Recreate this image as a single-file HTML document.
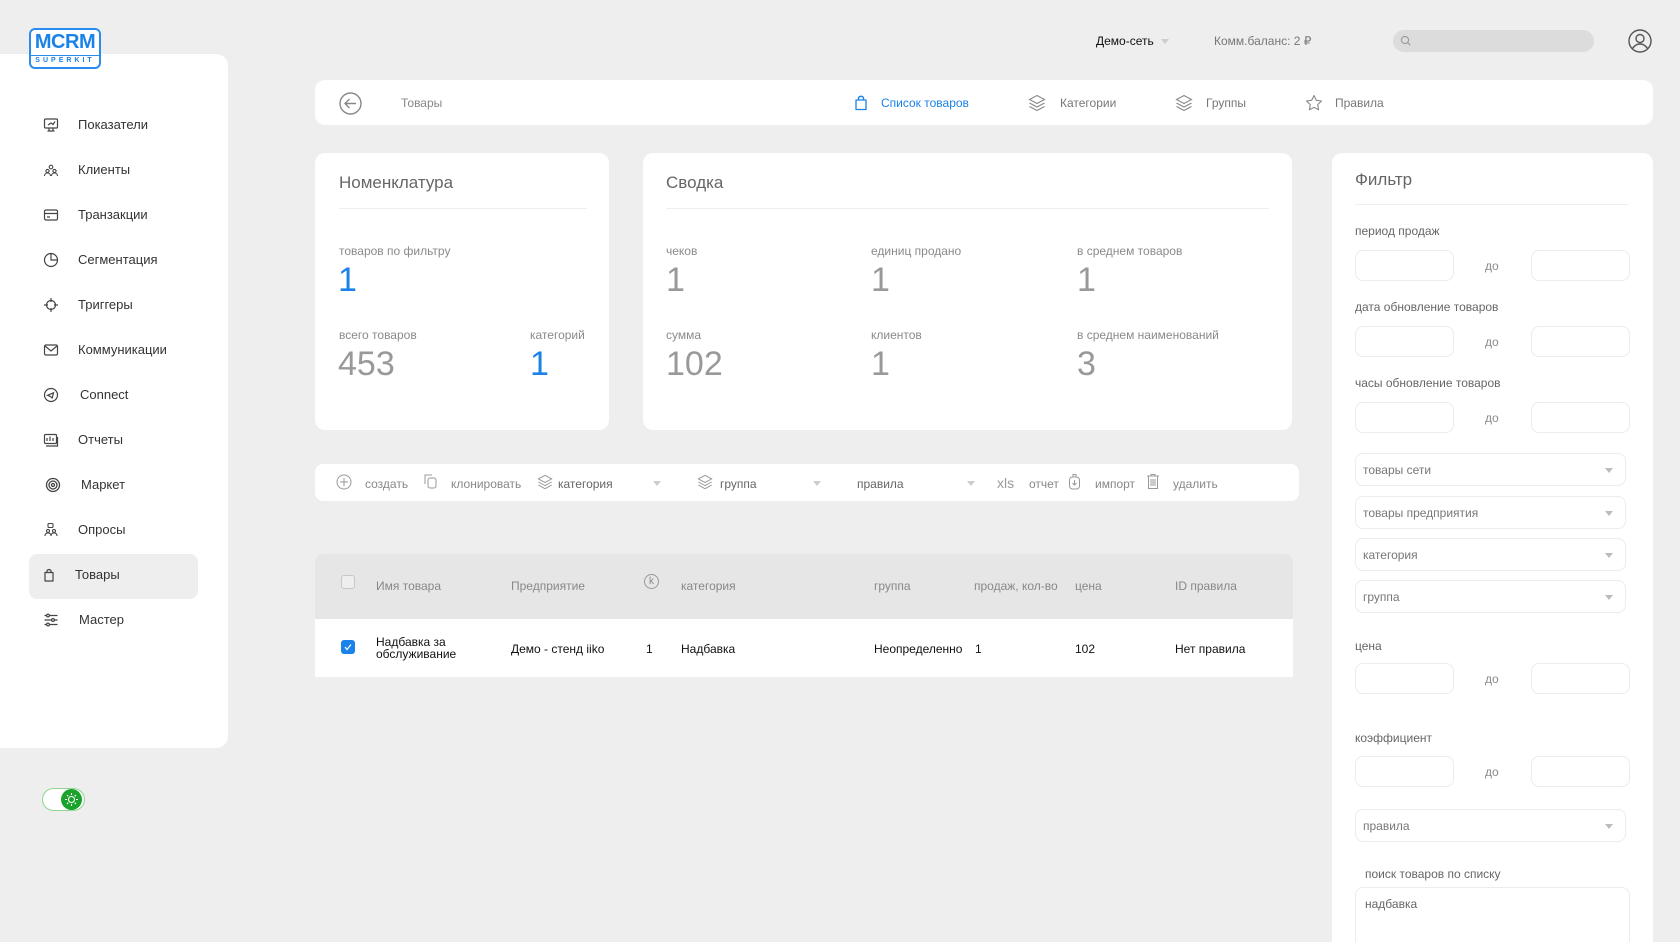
<!DOCTYPE html>
<html><head><meta charset="utf-8"><style>
*{box-sizing:border-box;margin:0;padding:0}
html{width:1680px;height:942px;overflow:hidden}
body{width:1680px;height:942px;overflow:hidden;background:#eeeeee;font-family:"Liberation Sans",sans-serif;color:#333;position:relative}
.abs{position:absolute}
.card{position:absolute;background:#fff;border-radius:10px}
.nav{position:absolute;left:0;width:228px;height:45px;font-size:13px;color:#333}
.nav svg{position:absolute;left:43px;top:14px}
.nav span{position:absolute;left:78px;top:14px}
.lbl{position:absolute;font-size:12px;color:#8a8a8a}
.num{position:absolute;font-size:34px;color:#999;line-height:34px}
.blue{color:#1a82e8}
.inp{position:absolute;background:#fff;border:1px solid #ececec;border-radius:8px}
.sel{position:absolute;left:23px;width:271px;height:33px;border:1px solid #ececec;border-radius:8px;font-size:12px;color:#777;padding:9px 7px}
.sel:after{content:"";position:absolute;right:12px;top:14px;border:4px solid transparent;border-top:5px solid #bbb}
.tb{position:absolute;top:13px;font-size:12px;color:#888}
.th{position:absolute;top:25px;font-size:12px;color:#888}
.td{position:absolute;font-size:12px;color:#111}
.arr{position:absolute;top:17px;border:4px solid transparent;border-top:5px solid #ccc}
</style></head><body>

<!-- sidebar -->
<div class="abs" style="left:0;top:54px;width:228px;height:694px;background:#fff;border-radius:0 12px 12px 0"></div>
<div class="abs" style="left:29px;top:554px;width:169px;height:45px;background:#eeeeee;border-radius:8px"></div>

<!-- logo -->
<div class="abs" style="left:29px;top:28px;width:72px;height:41px;border:2px solid #2a8cf0;border-radius:6px;background:#fff;">
  <div style="position:absolute;left:0;right:0;top:1px;text-align:center;font-size:20px;color:#1a82e8;font-weight:bold;letter-spacing:-0.5px">MCRM</div>
  <div style="position:absolute;left:0;right:0;top:25px;border-top:1.5px solid #2a8cf0"></div>
  <div style="position:absolute;left:0;right:0;top:27px;text-align:center;font-size:7px;color:#1a82e8;font-weight:bold;letter-spacing:3px">SUPERKIT</div>
</div>

<div class="nav" style="top:103px"><svg width="16" height="16" viewBox="0 0 16 16" fill="none" stroke="#444" stroke-width="1.2"><rect x="1.5" y="2" width="13" height="9" rx="1"/><path d="M6 11v3M10 11v3M4.5 14h7M5 8l3-2 2 1.5 2-3"/></svg><span>Показатели</span></div>
<div class="nav" style="top:148px"><svg width="16" height="16" viewBox="0 0 16 16" fill="none" stroke="#444" stroke-width="1.1"><circle cx="8" cy="5" r="1.8"/><circle cx="4.5" cy="9" r="1.6"/><circle cx="11.5" cy="9" r="1.6"/><path d="M1.5 14c0-2 1.5-3 3-3s3 1 3 3M8.5 14c0-2 1.5-3 3-3s3 1 3 3"/></svg><span>Клиенты</span></div>
<div class="nav" style="top:193px"><svg width="16" height="16" viewBox="0 0 16 16" fill="none" stroke="#444" stroke-width="1.2"><rect x="1.5" y="3" width="13" height="10" rx="1.5"/><path d="M1.5 6.5h13M4 10h3"/></svg><span>Транзакции</span></div>
<div class="nav" style="top:238px"><svg width="16" height="16" viewBox="0 0 16 16" fill="none" stroke="#444" stroke-width="1.2"><circle cx="8" cy="8" r="6.5"/><path d="M8 1.5V8h6.5"/></svg><span>Сегментация</span></div>
<div class="nav" style="top:283px"><svg width="16" height="16" viewBox="0 0 16 16" fill="none" stroke="#444" stroke-width="1.2"><circle cx="8" cy="8" r="4.5"/><path d="M8 1v4M8 11v4M1 8h4M11 8h4"/></svg><span>Триггеры</span></div>
<div class="nav" style="top:328px"><svg width="16" height="16" viewBox="0 0 16 16" fill="none" stroke="#444" stroke-width="1.2"><rect x="1.5" y="3" width="13" height="10" rx="1.5"/><path d="M2 4l6 5 6-5"/></svg><span>Коммуникации</span></div>
<div class="nav" style="top:373px"><svg width="16" height="16" viewBox="0 0 16 16" fill="none" stroke="#444" stroke-width="1.2"><circle cx="8" cy="8" r="6.5"/><path d="M4.5 8.3l6-2.5-1.3 5.2-2-1.6z"/></svg><span style="left:80px">Connect</span></div>
<div class="nav" style="top:418px"><svg width="16" height="16" viewBox="0 0 16 16" fill="none" stroke="#444" stroke-width="1.2"><rect x="1.5" y="2.5" width="12" height="9" rx="1"/><path d="M3 14h11.5V5M4 9V6M7 9V4.5M10 9V6"/></svg><span>Отчеты</span></div>
<div class="nav" style="top:463px"><svg width="16" height="16" viewBox="0 0 16 16" fill="none" stroke="#444" stroke-width="1.3" style="left:45px"><circle cx="8" cy="8" r="6.5"/><circle cx="8" cy="8" r="4"/><circle cx="8" cy="8" r="1.5"/></svg><span style="left:81px">Маркет</span></div>
<div class="nav" style="top:508px"><svg width="16" height="16" viewBox="0 0 16 16" fill="none" stroke="#444" stroke-width="1.1"><rect x="5" y="1.5" width="5" height="4" rx="1"/><circle cx="5" cy="9" r="1.5"/><circle cx="11" cy="9" r="1.5"/><path d="M2 14c0-2 1.3-3 3-3s3 1 3 3M8 14c0-2 1.3-3 3-3s3 1 3 3"/></svg><span>Опросы</span></div>
<div class="nav" style="top:553px"><svg width="16" height="16" viewBox="0 0 16 16" fill="none" stroke="#444" stroke-width="1.2" style="left:41px"><path d="M4 5.5h8v8.5H4z" stroke-linejoin="round"/><path d="M6 5.5V3.5Q8 1.5 10 3.5V5.5"/></svg><span style="left:75px">Товары</span></div>
<div class="nav" style="top:598px"><svg width="16" height="16" viewBox="0 0 16 16" fill="none" stroke="#444" stroke-width="1.2"><path d="M1.5 3.5h13M1.5 8h13M1.5 12.5h13"/><circle cx="5" cy="3.5" r="1.4" fill="#fff"/><circle cx="10" cy="8" r="1.4" fill="#fff"/><circle cx="5" cy="12.5" r="1.4" fill="#fff"/></svg><span style="left:79px">Мастер</span></div>

<!-- toggle -->
<div class="abs" style="left:42px;top:788px;width:43px;height:23px;border:1.5px solid #8fd68f;border-radius:12px;background:#fff"></div>
<div class="abs" style="left:61px;top:789px;width:21px;height:21px;border-radius:50%;background:#1aa32a"></div>
<svg class="abs" style="left:63px;top:791px" width="17" height="17" viewBox="0 0 17 17" fill="none" stroke="#fff" stroke-width="1.1"><circle cx="8.5" cy="8.5" r="3"/><path d="M8.5 2v2M8.5 13v2M2 8.5h2M13 8.5h2M4 4l1.3 1.3M11.7 11.7L13 13M4 13l1.3-1.3M11.7 5.3L13 4"/></svg>

<!-- header -->
<div class="abs" style="left:1096px;top:34px;font-size:12px;color:#111">Демо-сеть</div>
<div class="abs" style="left:1161px;top:39px;border:4px solid transparent;border-top:5px solid #ccc"></div>
<div class="abs" style="left:1214px;top:34px;font-size:12px;color:#777">Комм.баланс: 2 ₽</div>
<div class="abs" style="left:1393px;top:30px;width:201px;height:22px;border-radius:11px;background:#dcdcdc"></div>
<svg class="abs" style="left:1400px;top:35px" width="12" height="12" viewBox="0 0 12 12" fill="none" stroke="#999" stroke-width="1.1"><circle cx="5" cy="5" r="3.6"/><path d="M7.7 7.7l2.5 2.5"/></svg>
<svg class="abs" style="left:1628px;top:29px" width="24" height="24" viewBox="0 0 24 24" fill="none" stroke="#555" stroke-width="1.4"><circle cx="12" cy="12" r="11"/><circle cx="12" cy="9.5" r="4"/><path d="M4.5 19.5c2-3 4.5-4.5 7.5-4.5s5.5 1.5 7.5 4.5"/></svg>

<!-- top tabs -->
<div class="card" style="left:315px;top:80px;width:1338px;height:45px"></div>
<svg class="abs" style="left:339px;top:92px" width="23" height="23" viewBox="0 0 23 23" fill="none" stroke="#888" stroke-width="1.4"><circle cx="11.5" cy="11.5" r="10.5"/><path d="M17 11.5H6.5M10.5 7l-4.5 4.5 4.5 4.5"/></svg>
<div class="abs" style="left:401px;top:96px;font-size:12px;color:#888">Товары</div>
<svg class="abs" style="left:854px;top:94px" width="14" height="17" viewBox="0 0 14 17" fill="none" stroke="#1a82e8" stroke-width="1.3"><path d="M2 6h10v9.5H2z" stroke-linejoin="round"/><path d="M4.5 6V3.5Q7 1 9.5 3.5V6"/></svg>
<div class="abs blue" style="left:881px;top:96px;font-size:12px">Список товаров</div>
<svg class="abs" style="left:1028px;top:94px" width="18" height="18" viewBox="0 0 18 18" fill="none" stroke="#888" stroke-width="1.1"><path d="M9 1.5l7.5 4L9 9.5 1.5 5.5z"/><path d="M1.5 9L9 13l7.5-4M1.5 12.5L9 16.5l7.5-4"/></svg>
<div class="abs" style="left:1060px;top:96px;font-size:12px;color:#777">Категории</div>
<svg class="abs" style="left:1175px;top:94px" width="18" height="18" viewBox="0 0 18 18" fill="none" stroke="#888" stroke-width="1.1"><path d="M9 1.5l7.5 4L9 9.5 1.5 5.5z"/><path d="M1.5 9L9 13l7.5-4M1.5 12.5L9 16.5l7.5-4"/></svg>
<div class="abs" style="left:1206px;top:96px;font-size:12px;color:#777">Группы</div>
<svg class="abs" style="left:1305px;top:94px" width="18" height="18" viewBox="0 0 18 18" fill="none" stroke="#888" stroke-width="1.1"><path d="M9 1.5l2.3 4.8 5.2.7-3.8 3.6.9 5.2L9 13.3l-4.6 2.5.9-5.2L1.5 7l5.2-.7z" stroke-linejoin="round"/></svg>
<div class="abs" style="left:1335px;top:96px;font-size:12px;color:#777">Правила</div>

<!-- Номенклатура -->
<div class="card" style="left:315px;top:153px;width:294px;height:277px">
  <div class="abs" style="left:24px;top:20px;font-size:17px;color:#666">Номенклатура</div>
  <div class="abs" style="left:24px;top:55px;width:248px;border-top:1px solid #eee"></div>
  <div class="lbl" style="left:24px;top:91px">товаров по фильтру</div>
  <div class="num blue" style="left:23px;top:110px">1</div>
  <div class="lbl" style="left:24px;top:175px">всего товаров</div>
  <div class="num" style="left:23px;top:194px">453</div>
  <div class="lbl" style="left:215px;top:175px">категорий</div>
  <div class="num blue" style="left:215px;top:194px">1</div>
</div>

<!-- Сводка -->
<div class="card" style="left:643px;top:153px;width:649px;height:277px">
  <div class="abs" style="left:23px;top:20px;font-size:17px;color:#666">Сводка</div>
  <div class="abs" style="left:23px;top:55px;width:603px;border-top:1px solid #eee"></div>
  <div class="lbl" style="left:23px;top:91px">чеков</div><div class="num" style="left:23px;top:110px">1</div>
  <div class="lbl" style="left:228px;top:91px">единиц продано</div><div class="num" style="left:228px;top:110px">1</div>
  <div class="lbl" style="left:434px;top:91px">в среднем товаров</div><div class="num" style="left:434px;top:110px">1</div>
  <div class="lbl" style="left:23px;top:175px">сумма</div><div class="num" style="left:23px;top:194px">102</div>
  <div class="lbl" style="left:228px;top:175px">клиентов</div><div class="num" style="left:228px;top:194px">1</div>
  <div class="lbl" style="left:434px;top:175px">в среднем наименований</div><div class="num" style="left:434px;top:194px">3</div>
</div>

<!-- toolbar -->
<div class="card" style="left:315px;top:464px;width:984px;height:37px;border-radius:8px">
  <svg class="abs" style="left:21px;top:10px" width="16" height="16" viewBox="0 0 16 16" fill="none" stroke="#999" stroke-width="1"><circle cx="8" cy="8" r="7"/><path d="M8 4v8M4 8h8"/></svg>
  <div class="tb" style="left:50px">создать</div>
  <svg class="abs" style="left:107px;top:9px" width="16" height="17" viewBox="0 0 16 17" fill="none" stroke="#999" stroke-width="1"><path d="M3 11V2h7"/><rect x="6" y="5" width="8" height="10" rx="2"/></svg>
  <div class="tb" style="left:136px">клонировать</div>
  <svg class="abs" style="left:222px;top:10px" width="16" height="16" viewBox="0 0 18 18" fill="none" stroke="#999" stroke-width="1.1"><path d="M9 1.5l7.5 4L9 9.5 1.5 5.5z"/><path d="M1.5 9L9 13l7.5-4M1.5 12.5L9 16.5l7.5-4"/></svg>
  <div class="tb" style="left:243px;color:#666">категория</div>
  <div class="arr" style="left:338px"></div>
  <svg class="abs" style="left:382px;top:10px" width="16" height="16" viewBox="0 0 18 18" fill="none" stroke="#999" stroke-width="1.1"><path d="M9 1.5l7.5 4L9 9.5 1.5 5.5z"/><path d="M1.5 9L9 13l7.5-4M1.5 12.5L9 16.5l7.5-4"/></svg>
  <div class="tb" style="left:405px;color:#666">группа</div>
  <div class="arr" style="left:498px"></div>
  <div class="tb" style="left:542px;color:#666">правила</div>
  <div class="arr" style="left:652px"></div>
  <div class="tb" style="left:682px;top:11px;font-size:14px;color:#999">xls</div>
  <div class="tb" style="left:714px">отчет</div>
  <svg class="abs" style="left:753px;top:9px" width="13" height="17" viewBox="0 0 13 17" fill="none" stroke="#999" stroke-width="1"><rect x="1.5" y="4" width="10" height="12" rx="3"/><path d="M5 4V1.5h3V4M6.5 7v5M4.5 10l2 2 2-2"/></svg>
  <div class="tb" style="left:780px">импорт</div>
  <svg class="abs" style="left:831px;top:9px" width="14" height="17" viewBox="0 0 14 17" fill="none" stroke="#999" stroke-width="1"><path d="M1 3h12M5 3V1.5h4V3M2.5 3v12.5h9V3M5 6v7M7 6v7M9 6v7"/></svg>
  <div class="tb" style="left:858px">удалить</div>
</div>

<!-- table -->
<div class="abs" style="left:315px;top:554px;width:978px;height:65px;background:#e6e6e6;border-radius:8px 8px 0 0">
  <div class="abs" style="left:26px;top:21px;width:14px;height:14px;border:1px solid #c8c8c8;border-radius:3px;background:#eee"></div>
  <div class="th" style="left:61px">Имя товара</div>
  <div class="th" style="left:196px">Предприятие</div>
  <div class="abs" style="left:329px;top:20px;width:15px;height:15px;border:1px solid #999;border-radius:50%;font-size:10px;color:#888;text-align:center;line-height:13px">k</div>
  <div class="th" style="left:366px">категория</div>
  <div class="th" style="left:559px">группа</div>
  <div class="th" style="left:659px">продаж, кол-во</div>
  <div class="th" style="left:760px">цена</div>
  <div class="th" style="left:860px">ID правила</div>
</div>
<div class="abs" style="left:315px;top:619px;width:978px;height:58px;background:#fff">
  <div class="abs" style="left:26px;top:21px;width:14px;height:14px;border-radius:3px;background:#1a82e8"></div>
  <svg class="abs" style="left:28px;top:23px" width="10" height="10" viewBox="0 0 10 10" fill="none" stroke="#fff" stroke-width="1.3"><path d="M2 5l2 2.5L8 2.5"/></svg>
  <div class="td" style="left:61px;top:17px;line-height:12px">Надбавка за<br>обслуживание</div>
  <div class="td" style="left:196px;top:23px">Демо - стенд iiko</div>
  <div class="td" style="left:331px;top:23px">1</div>
  <div class="td" style="left:366px;top:23px">Надбавка</div>
  <div class="td" style="left:559px;top:23px">Неопределенно</div>
  <div class="td" style="left:660px;top:23px">1</div>
  <div class="td" style="left:760px;top:23px">102</div>
  <div class="td" style="left:860px;top:23px">Нет правила</div>
</div>

<!-- filter -->
<div class="card" style="left:1332px;top:153px;width:321px;height:800px;border-radius:10px 10px 0 0">
  <div class="abs" style="left:23px;top:17px;font-size:17px;color:#666">Фильтр</div>
  <div class="abs" style="left:23px;top:51px;width:273px;border-top:1px solid #eee"></div>
  <div class="lbl" style="left:23px;top:71px;color:#666">период продаж</div>
  <div class="inp" style="left:23px;top:97px;width:99px;height:31px"></div><div class="lbl" style="left:153px;top:106px">до</div><div class="inp" style="left:199px;top:97px;width:99px;height:31px"></div>
  <div class="lbl" style="left:23px;top:147px;color:#666">дата обновление товаров</div>
  <div class="inp" style="left:23px;top:173px;width:99px;height:31px"></div><div class="lbl" style="left:153px;top:182px">до</div><div class="inp" style="left:199px;top:173px;width:99px;height:31px"></div>
  <div class="lbl" style="left:23px;top:223px;color:#666">часы обновление товаров</div>
  <div class="inp" style="left:23px;top:249px;width:99px;height:31px"></div><div class="lbl" style="left:153px;top:258px">до</div><div class="inp" style="left:199px;top:249px;width:99px;height:31px"></div>
  <div class="sel" style="top:300px">товары сети</div>
  <div class="sel" style="top:343px">товары предприятия</div>
  <div class="sel" style="top:385px">категория</div>
  <div class="sel" style="top:427px">группа</div>
  <div class="lbl" style="left:23px;top:486px;color:#666">цена</div>
  <div class="inp" style="left:23px;top:510px;width:99px;height:31px"></div><div class="lbl" style="left:153px;top:519px">до</div><div class="inp" style="left:199px;top:510px;width:99px;height:31px"></div>
  <div class="lbl" style="left:23px;top:578px;color:#666">коэффициент</div>
  <div class="inp" style="left:23px;top:603px;width:99px;height:31px"></div><div class="lbl" style="left:153px;top:612px">до</div><div class="inp" style="left:199px;top:603px;width:99px;height:31px"></div>
  <div class="sel" style="top:656px">правила</div>
  <div class="lbl" style="left:33px;top:714px;color:#666">поиск товаров по списку</div>
  <div class="inp" style="left:23px;top:734px;width:275px;height:80px;font-size:12px;color:#666;padding:9px 9px">надбавка</div>
</div>
</body></html>
